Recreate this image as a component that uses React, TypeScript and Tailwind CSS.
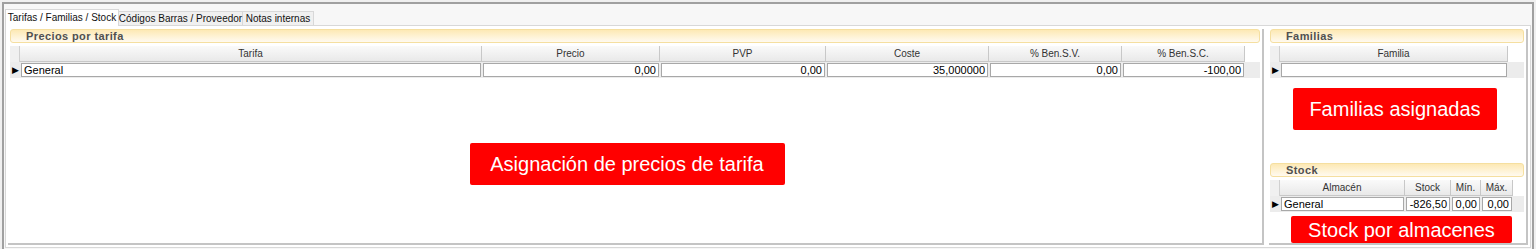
const font = { fontFamily: '"Liberation Sans", Arial, sans-serif' }

const priceCols = [
  { label: "Tarifa", w: "w-[462px]", value: "General", left: true },
  { label: "Precio", w: "w-[178px]", value: "0,00" },
  { label: "PVP", w: "w-[166px]", value: "0,00" },
  { label: "Coste", w: "w-[163px]", value: "35,000000" },
  { label: "% Ben.S.V.", w: "w-[133px]", value: "0,00" },
  { label: "% Ben.S.C.", w: "w-[123px]", value: "-100,00" },
]

const stockCols = [
  { label: "Almacén", w: "w-[125px]", value: "General", left: true },
  { label: "Stock", w: "w-[46px]", value: "-826,50" },
  { label: "Mín.", w: "w-[30px]", value: "0,00" },
  { label: "Máx.", w: "w-[32px]", value: "0,00" },
]

type Col = { label: string; w: string; value: string; left?: boolean }

function SectionHeader({ title }: { title: string }) {
  return (
    <div className="h-[14px] rounded-[3px] border border-[#f5dfa0] bg-gradient-to-b from-[#fde9b4] to-[#fffaf0] pl-[15px] text-[11px] leading-[12px] font-bold tracking-[0.4px] text-[#505050]">
      {title}
    </div>
  )
}

function Grid({ cols }: { cols: Col[] }) {
  return (
    <div className="flex flex-col text-[10px] text-[#222]">
      <div className="flex h-[16px]">
        <div className="w-[10px] border-r border-[#d0d0d0] bg-[#f0f0f0]" />
        {cols.map((c) => (
          <div
            key={c.label}
            className={`${c.w} flex items-center justify-center border-r border-b border-[#c8c8c8] bg-gradient-to-b from-[#fafafa] to-[#e9e9e9] leading-none whitespace-nowrap text-[#333]`}
          >
            {c.label}
          </div>
        ))}
      </div>
      <div className="flex h-[16px] bg-[#ececec]">
        <div className="flex w-[10px] items-center justify-center text-[9px] leading-none text-black">▶</div>
        {cols.map((c) => (
          <div key={c.label} className={`${c.w} p-[1px]`}>
            <div
              className={`h-full overflow-hidden border border-[#a8a8a8] bg-white px-[2px] text-[11px] leading-[12px] whitespace-nowrap text-black ${
                c.left ? "text-left" : "text-right"
              }`}
            >
              {c.value}
            </div>
          </div>
        ))}
      </div>
    </div>
  )
}

function RedLabel({ text, className }: { text: string; className: string }) {
  return (
    <div className={`flex items-center justify-center rounded-[2px] bg-[#ff0000] whitespace-nowrap text-white ${className}`}>
      {text}
    </div>
  )
}

export default function App() {
  return (
    <div className="h-[249px] w-[1536px] overflow-hidden bg-[#f0f0f0] pt-[2px] pr-[2px] pl-[2px]" style={font}>
      <div className="flex h-[247px] flex-col border-t-2 border-l-2 border-r-2 border-[#a0a0a0] bg-[#f7f7f7] pr-[1px] pl-[1px]">
        {/* Tabs */}
        <div className="mt-[5px] flex h-[17px] items-end text-[10px] leading-none whitespace-nowrap">
          <div className="flex h-[17px] w-[114px] items-center justify-center border border-b-0 border-[#d8d8d8] bg-white text-[#111]">
            Tarifas / Familias / Stock
          </div>
          <div className="flex h-[15px] w-[124px] items-center justify-center border border-l-0 border-[#d8d8d8] bg-[#f0f0f0] text-[#111]">
            Códigos Barras / Proveedor
          </div>
          <div className="flex h-[15px] w-[71px] items-center justify-center border border-l-0 border-[#d8d8d8] bg-[#f0f0f0] text-[#111]">
            Notas internas
          </div>
          <div className="flex-1 border-b border-[#d8d8d8]" />
        </div>

        {/* Content */}
        <div className="flex flex-1 gap-[5px] border-x border-b border-[#d8d8d8] bg-white px-[2px] pt-[3px] pb-[2px]">
          {/* Left */}
          <div className="flex w-[1256px] flex-col border-r-2 border-b-2 border-[#c4c4c4] pl-[2px] pr-[2px]">
            <SectionHeader title="Precios por tarifa" />
            <div className="mt-[3px]">
              <Grid cols={priceCols} />
            </div>
            <div className="flex flex-1 items-start justify-center pt-[65px] pr-[16px]">
              <RedLabel text="Asignación de precios de tarifa" className="h-[42px] w-[315px] text-[20px]" />
            </div>
          </div>

          {/* Right */}
          <div className="flex flex-1 flex-col border-r-2 border-b-2 border-[#c4c4c4] pl-[1px] pr-[2px]">
            <SectionHeader title="Familias" />
            <div className="mt-[3px]">
              <Grid cols={[{ label: "Familia", w: "w-[228px]", value: "", left: true }]} />
            </div>
            <div className="flex h-[85px] justify-start pt-[10px] pl-[23px]">
              <RedLabel text="Familias asignadas" className="h-[42px] w-[204px] text-[20px]" />
            </div>
            <SectionHeader title="Stock" />
            <div className="mt-[3px]">
              <Grid cols={stockCols} />
            </div>
            <div className="flex pt-[4px] pl-[21px]">
              <RedLabel text="Stock por almacenes" className="h-[27px] w-[221px] text-[20px]" />
            </div>
          </div>
        </div>
        <div className="h-[2px]" />
      </div>
    </div>
  )
}
